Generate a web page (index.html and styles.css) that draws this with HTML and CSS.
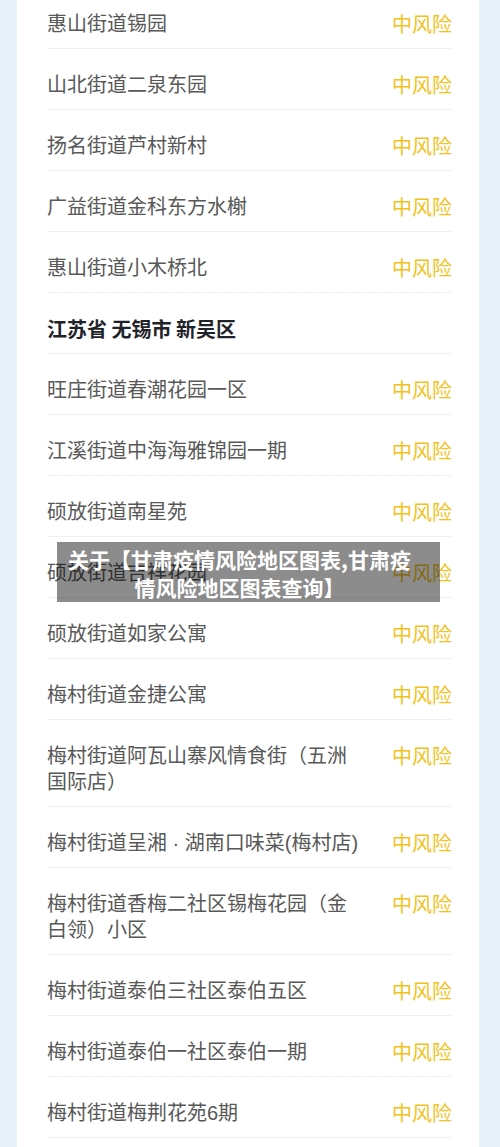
FILE: index.html
```html
<!DOCTYPE html>
<html lang="zh-CN">
<head>
    <meta charset="UTF-8">
    <meta name="viewport" content="width=device-width, initial-scale=1.0">
    <title>甘肃疫情风险地区图表</title>
    <link rel="stylesheet" href="styles.css">
</head>
<body>
    <div class="risk-card">
        <div class="risk-row"><span class="place">惠山街道锡园</span><span class="level">中风险</span></div>
        <div class="risk-row"><span class="place">山北街道二泉东园</span><span class="level">中风险</span></div>
        <div class="risk-row"><span class="place">扬名街道芦村新村</span><span class="level">中风险</span></div>
        <div class="risk-row"><span class="place">广益街道金科东方水榭</span><span class="level">中风险</span></div>
        <div class="risk-row"><span class="place">惠山街道小木桥北</span><span class="level">中风险</span></div>
        <div class="risk-row region">江苏省 无锡市 新吴区</div>
        <div class="risk-row"><span class="place">旺庄街道春潮花园一区</span><span class="level">中风险</span></div>
        <div class="risk-row"><span class="place">江溪街道中海海雅锦园一期</span><span class="level">中风险</span></div>
        <div class="risk-row"><span class="place">硕放街道南星苑</span><span class="level">中风险</span></div>
        <div class="risk-row"><span class="place">硕放街道吉祥花园</span><span class="level">中风险</span></div>
        <div class="risk-row"><span class="place">硕放街道如家公寓</span><span class="level">中风险</span></div>
        <div class="risk-row"><span class="place">梅村街道金捷公寓</span><span class="level">中风险</span></div>
        <div class="risk-row"><span class="place">梅村街道阿瓦山寨风情食街（五洲国际店）</span><span class="level">中风险</span></div>
        <div class="risk-row"><span class="place">梅村街道呈湘 &#183; 湖南口味菜(梅村店)</span><span class="level">中风险</span></div>
        <div class="risk-row"><span class="place">梅村街道香梅二社区锡梅花园（金白领）小区</span><span class="level">中风险</span></div>
        <div class="risk-row"><span class="place">梅村街道泰伯三社区泰伯五区</span><span class="level">中风险</span></div>
        <div class="risk-row"><span class="place">梅村街道泰伯一社区泰伯一期</span><span class="level">中风险</span></div>
        <div class="risk-row"><span class="place">梅村街道梅荆花苑6期</span><span class="level">中风险</span></div>
    </div>

    <div class="title-overlay">关于【甘肃疫情风险地区图表,甘肃疫情风险地区图表查询】</div>
</body>
</html>
```

FILE: styles.css
```css
body {
    font-family: "Noto Sans CJK SC", "Noto Sans", sans-serif;
    background-color: #e7f1f9;
    margin: 0;
    position: relative;
    overflow: hidden;
}
.risk-card {
    background-color: #fff;
    margin: -12px 21px 0 17px;
    padding: 0 27px 40px 30px;
}
.risk-row {
    display: flex;
    align-items: flex-start;
    padding: 23px 0 11px;
    border-bottom: 1px solid #eef0f2;
    font-size: 20px;
    line-height: 26px;
    color: #585858;
}
.place {
    flex: 1;
    min-width: 0;
    font-family: "Liberation Sans", "Noto Sans CJK SC", sans-serif;
}
.level {
    margin-left: 28px;
    color: #f2c21b;
    white-space: nowrap;
}
.region {
    font-weight: bold;
    color: #1f2329;
}
.title-overlay {
    position: absolute;
    top: 542px;
    left: 57px;
    width: 351px;
    height: 57px;
    padding: 3px 25px 0 7px;
    background-color: rgba(0, 0, 0, 0.45);
    color: #fff;
    font-size: 21px;
    font-weight: bold;
    line-height: 28px;
    text-align: center;
}
```
